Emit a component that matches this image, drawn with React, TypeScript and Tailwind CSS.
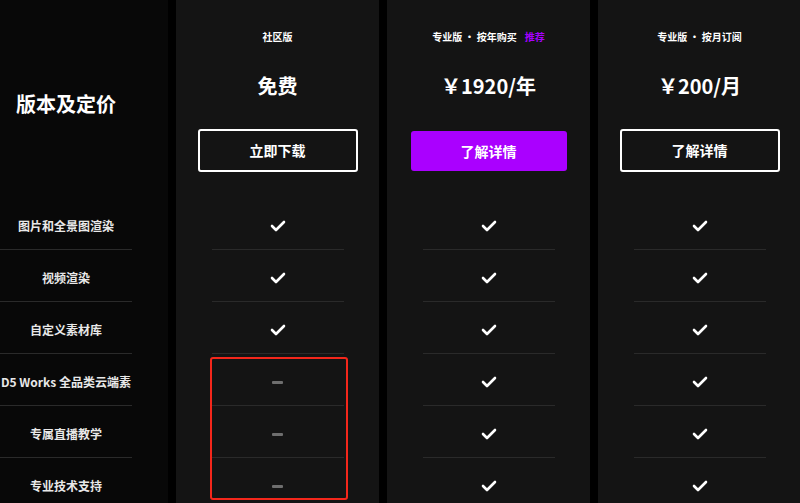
import React from 'react';

type Cell = 'yes' | 'no';

interface Plan {
  id: string;
  title: string;
  tag?: string;
  price: string;
  cta: string;
  primary?: boolean;
  cells: Cell[];
}

const features = [
  '图片和全景图渲染',
  '视频渲染',
  '自定义素材库',
  'D5 Works 全品类云端素',
  '专属直播教学',
  '专业技术支持',
];

const plans: Plan[] = [
  { id: 'free', title: '社区版', price: '免费', cta: '立即下载', cells: ['yes', 'yes', 'yes', 'no', 'no', 'no'] },
  { id: 'year', title: '专业版 · 按年购买', tag: '推荐', price: '￥1920/年', cta: '了解详情', primary: true, cells: ['yes', 'yes', 'yes', 'yes', 'yes', 'yes'] },
  { id: 'month', title: '专业版 · 按月订阅', price: '￥200/月', cta: '了解详情', cells: ['yes', 'yes', 'yes', 'yes', 'yes', 'yes'] },
];

function CheckMark() {
  return (
    <svg width="16" height="12" viewBox="0 0 16 12" fill="none">
      <polyline points="2,6 6,10 14,2" stroke="#ffffff" strokeWidth="2.6" strokeLinecap="round" strokeLinejoin="round" />
    </svg>
  );
}

function PlanColumn({ plan }: { plan: Plan }) {
  return (
    <div className="relative w-[203px] shrink-0 bg-[#141414] flex flex-col items-center">
      {/* header */}
      <div className="h-[197px] shrink-0 w-full flex flex-col items-center pt-[30px]">
        <div className="text-[10px] leading-[14px] font-bold text-white whitespace-nowrap">
          {plan.title}
          {plan.tag && <span className="ml-[8px] text-[#a600ff]">{plan.tag}</span>}
        </div>
        <div className="mt-[28px] text-[20px] leading-[28px] font-bold text-white">{plan.price}</div>
        <div className="mt-[29px] w-[160px] h-[43px] flex items-center justify-center">
          {plan.primary ? (
            <button className="w-[156px] h-[40px] mt-[1px] rounded-[3px] bg-[#aa00ff] text-white text-[14px] font-bold">
              {plan.cta}
            </button>
          ) : (
            <button className="w-[160px] h-[43px] rounded-[3px] border-2 border-white text-white text-[14px] font-bold">
              {plan.cta}
            </button>
          )}
        </div>
      </div>

      {/* feature cells */}
      <div className="w-[132px] shrink-0 flex flex-col">
        {plan.cells.map((cell, i) => (
          <div
            key={i}
            className={`h-[52px] shrink-0 flex items-center justify-center pt-[5px] ${i > 0 ? 'border-t border-[#2a2a2a]' : ''}`}
          >
            {cell === 'yes' ? <CheckMark /> : <div className="w-[11px] h-[3px] rounded-[1px] bg-[#6e6e6e]" />}
          </div>
        ))}
      </div>

      {plan.id === 'free' && (
        <div className="absolute left-[34px] top-[357px] w-[138px] h-[143px] border-2 border-[#f4271b] rounded-[3px]" />
      )}
    </div>
  );
}

export default function App() {
  return (
    <div
      className="w-[800px] h-[503px] overflow-hidden bg-black flex items-start gap-[8px]"
      style={{ fontFamily: '"Noto Sans CJK SC", "Noto Sans", sans-serif' }}
    >
      {/* label column */}
      <div className="w-[168px] h-[560px] shrink-0 bg-[#080808] flex flex-col">
        <div className="h-[197px] shrink-0 flex items-center pl-[16px] pt-[10px]">
          <h2 className="text-[20px] font-bold text-white">版本及定价</h2>
        </div>
        <div className="w-[132px] shrink-0 flex flex-col">
          {features.map((f, i) => (
            <div
              key={f}
              className={`h-[52px] shrink-0 flex items-center justify-center pt-[5px] whitespace-nowrap text-[12px] font-bold text-[#e8e8e8] ${i > 0 ? 'border-t border-[#2a2a2a]' : ''}`}
            >
              {f}
            </div>
          ))}
        </div>
      </div>

      {plans.map((p) => (
        <div key={p.id} className="h-[560px] shrink-0 flex">
          <PlanColumn plan={p} />
        </div>
      ))}
    </div>
  );
}
